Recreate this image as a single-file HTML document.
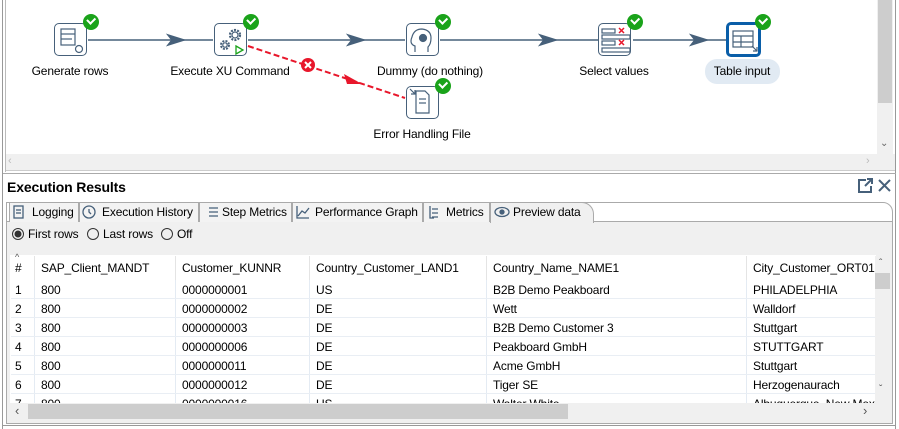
<!DOCTYPE html>
<html><head><meta charset="utf-8">
<style>
*{box-sizing:border-box}
body{margin:0;width:899px;height:429px;overflow:hidden;background:#fff;font-family:"Liberation Sans",sans-serif;font-size:12px;color:#000;position:relative;letter-spacing:-0.15px}
.abs{position:absolute}
.lbl{position:absolute;font-size:12px;white-space:nowrap;transform:translateX(-50%)}
.node{position:absolute;width:33px;height:33px;border:1.5px solid #46607a;border-radius:5px;background:#fff}
.ok{position:absolute;width:16px;height:16px;border-radius:50%;background:#1aa31a}
.ok:after{content:"";position:absolute;left:4px;top:3px;width:6px;height:3.5px;border-left:2px solid #fff;border-bottom:2px solid #fff;transform:rotate(-45deg)}
.tab{position:absolute;top:202px;height:20px;border:1px solid #aaa;border-bottom:none;background:#f3f3f3;font-size:12px;padding:2px 0 0 22px;white-space:nowrap}
.th{position:absolute;top:256px;height:24px;font-size:12px;padding-top:5px;white-space:nowrap}
.row{position:absolute;left:11px;width:864px;height:19px;border-bottom:1px solid #e9eef4}
.c{position:absolute;top:3px;white-space:nowrap;font-size:12px}
.vl{position:absolute;top:280px;height:123px;width:1px;background:#e4ebf3}
</style></head><body>
<!-- canvas -->
<div class="abs" style="left:2px;top:0;width:1px;height:429px;background:#999"></div>
<div class="abs" style="left:5px;top:0;width:1px;height:172px;background:#bbb"></div>
<div class="abs" style="left:877px;top:0;width:16px;height:155px;background:#f0f0f0"></div>
<div class="abs" style="left:878px;top:0;width:14px;height:103px;background:#cdcdcd"></div>
<div class="abs" style="left:880px;top:138px;font-size:10px;color:#666">&#8964;</div>
<div class="abs" style="left:895px;top:0;width:1px;height:429px;background:#999"></div>
<div class="abs" style="left:6px;top:154px;width:889px;height:17px;background:#f0f0f0;border-bottom:1px solid #ccc"></div>
<div class="abs" style="left:8px;top:155px;font-size:11px;color:#bbb">&lsaquo;</div>
<div class="abs" style="left:866px;top:155px;font-size:11px;color:#bbb">&rsaquo;</div>

<svg class="abs" style="left:0;top:0" width="877" height="154">
<g stroke="#46607a" stroke-width="1.5" fill="#46607a">
<line x1="88" y1="40" x2="213" y2="40"/><path d="M168 35 L184 40 L168 45 L172 40Z"/>
<line x1="248" y1="40" x2="405" y2="40"/><path d="M348 35 L364 40 L348 45 L352 40Z"/>
<line x1="440" y1="40" x2="598" y2="40"/><path d="M540 35 L556 40 L540 45 L544 40Z"/>
<line x1="633" y1="40" x2="727" y2="40"/><path d="M691 35 L707 40 L691 45 L695 40Z"/>
</g>
<line x1="248" y1="46" x2="405" y2="98" stroke="#e8172b" stroke-width="2" stroke-dasharray="6,3"/>
<path d="M344 74 L362 84 L347 84Z" fill="#e8172b"/>
<circle cx="308" cy="65" r="7" fill="#e8172b"/>
<path d="M305 62 L311 68 M311 62 L305 68" stroke="#fff" stroke-width="2"/>
<g stroke="#46607a" fill="none" stroke-width="1.2">
<rect x="61" y="29" width="14" height="16"/><line x1="61" y1="34" x2="75" y2="34"/><line x1="61" y1="39" x2="72" y2="39"/>
<circle cx="79" cy="49" r="3.5"/>
<circle cx="235" cy="35" r="5" stroke-dasharray="2,1.2" stroke-width="2.2"/><circle cx="235" cy="35" r="3"/>
<circle cx="225" cy="45" r="4" stroke-dasharray="2,1.2" stroke-width="2"/><circle cx="225" cy="45" r="2.2"/>
<path d="M415 52 L415 46 Q409 44 412 37 Q414 29 422 29 Q431 30 431 38 Q431 44 428 47 L428 52"/>
<circle cx="423" cy="38" r="3.5" fill="#46607a"/>
<path d="M416 91 L425 91 L429 95 L429 113 L416 113Z"/><line x1="419" y1="99" x2="426" y2="99"/><line x1="419" y1="103" x2="426" y2="103"/><path d="M410 89 L415 94 M415 90 L415 94 L411 94"/>
<rect x="602" y="29" width="13" height="4"/><rect x="602" y="35" width="28" height="4"/><rect x="602" y="41" width="13" height="4"/><rect x="602" y="48" width="28" height="4"/>
<rect x="733" y="31" width="20" height="16"/><line x1="733" y1="36" x2="753" y2="36"/><line x1="741" y1="36" x2="741" y2="47"/><line x1="733" y1="42" x2="753" y2="42"/>
<path d="M752 46 L757 51 M757 47 L757 51 L753 51"/>
</g>
<path d="M236 46 L243 50 L236 54Z" stroke="#1aa31a" fill="none" stroke-width="1.3"/>
<path d="M619 28 L624 33 M624 28 L619 33 M619 40 L624 45 M624 40 L619 45" stroke="#e8172b" stroke-width="1.5"/>
</svg>
<div class="node" style="left:54px;top:23px;background:transparent"></div>
<div class="node" style="left:214px;top:23px;background:transparent"></div>
<div class="node" style="left:406px;top:23px;background:transparent"></div>
<div class="node" style="left:406px;top:86px;background:transparent"></div>
<div class="node" style="left:598px;top:23px;background:transparent"></div>
<div class="node" style="left:726px;top:22px;width:35px;height:35px;border:3px solid #0a5ea8;background:transparent"></div>
<div class="ok" style="left:83px;top:14px"></div>
<div class="ok" style="left:243px;top:14px"></div>
<div class="ok" style="left:435px;top:14px"></div>
<div class="ok" style="left:435px;top:78px"></div>
<div class="ok" style="left:627px;top:14px"></div>
<div class="ok" style="left:755px;top:14px"></div>
<div class="lbl" style="left:70px;top:64px">Generate rows</div>
<div class="lbl" style="left:230px;top:64px">Execute XU Command</div>
<div class="lbl" style="left:430px;top:64px">Dummy (do nothing)</div>
<div class="lbl" style="left:422px;top:127px">Error Handling File</div>
<div class="lbl" style="left:614px;top:64px">Select values</div>
<div class="abs" style="left:705px;top:59px;width:75px;height:25px;border-radius:12px;background:#e1eaf3"></div>
<div class="lbl" style="left:742px;top:64px">Table input</div>

<!-- bottom panel -->
<div class="abs" style="left:3px;top:173px;width:893px;height:1px;background:#aaa"></div>
<div class="abs" style="left:7px;top:179px;font-weight:bold;font-size:14px">Execution Results</div>
<svg class="abs" style="left:857px;top:177px" width="38" height="18"><path d="M9 3 L2 3 L2 15 L14 15 L14 9 M8 9 L15 2 M10 2 L15 2 L15 7" stroke="#46607a" stroke-width="2" fill="none"/><path d="M22 3 L33 14 M33 3 L22 14" stroke="#46607a" stroke-width="2"/></svg>
<div class="abs" style="left:6px;top:202px;width:887px;height:222px;border:1px solid #aaa;border-radius:0 10px 0 0;background:#fff"></div>
<div class="abs" style="left:7px;top:221px;width:885px;height:202px;background:#f0f0f0;border-top:1px solid #aaa"></div>
<div class="tab" style="left:9px;width:70px">Logging</div>
<div class="tab" style="left:79px;width:120px">Execution History</div>
<div class="tab" style="left:199px;width:93px">Step Metrics</div>
<div class="tab" style="left:292px;width:131px">Performance Graph</div>
<div class="tab" style="left:423px;width:67px">Metrics</div>
<div class="tab" style="left:490px;width:104px;background:#f0f0f0;border-radius:0 12px 0 0;height:21px">Preview data</div>
<svg class="abs" style="left:12px;top:205px" width="580" height="16" fill="none" stroke="#46607a" stroke-width="1.3">
<rect x="2" y="1" width="9" height="12"/><line x1="4" y1="5" x2="9" y2="5"/><line x1="4" y1="8" x2="9" y2="8"/>
<circle cx="77" cy="7" r="6"/><path d="M77 4 L77 7 L79 9"/>
<path d="M197 3 L206 3 M197 7 L206 7 M197 11 L206 11"/>
<path d="M285 1 L285 13 L297 13 M286 11 L290 6 L293 8 L297 3"/>
<path d="M418 1 L418 13 L422 13 M420 4 L426 4 M420 8 L426 8 M420 12 L426 12"/>
<ellipse cx="490" cy="7" rx="7" ry="4.5"/><circle cx="490" cy="7" r="2" fill="#46607a"/>
</svg>
<svg class="abs" style="left:11px;top:227px" width="190" height="14" fill="none" stroke="#333">
<circle cx="7" cy="7" r="5.5"/><circle cx="7" cy="7" r="3" fill="#333"/>
<circle cx="82" cy="7" r="5.5"/><circle cx="156" cy="7" r="5.5"/>
</svg>
<div class="abs" style="left:28px;top:227px">First rows</div>
<div class="abs" style="left:103px;top:227px">Last rows</div>
<div class="abs" style="left:177px;top:227px">Off</div>
<!-- table -->
<div class="abs" style="left:10px;top:255px;width:866px;height:148px;background:#fff"></div>
<div class="abs" style="left:15px;top:252px;font-size:9px;color:#555">^</div>
<div class="th" style="left:15px">#</div>
<div class="th" style="left:41px">SAP_Client_MANDT</div>
<div class="th" style="left:182px">Customer_KUNNR</div>
<div class="th" style="left:316px">Country_Customer_LAND1</div>
<div class="th" style="left:493px">Country_Name_NAME1</div>
<div class="th" style="left:753px">City_Customer_ORT01</div>
<div class="abs" style="left:34px;top:256px;width:1px;height:24px;background:#e4e4e4"></div>
<div class="abs" style="left:175px;top:256px;width:1px;height:24px;background:#e4e4e4"></div>
<div class="abs" style="left:309px;top:256px;width:1px;height:24px;background:#e4e4e4"></div>
<div class="abs" style="left:486px;top:256px;width:1px;height:24px;background:#e4e4e4"></div>
<div class="abs" style="left:746px;top:256px;width:1px;height:24px;background:#e4e4e4"></div>
<div class="vl" style="left:34px"></div><div class="vl" style="left:175px"></div><div class="vl" style="left:309px"></div><div class="vl" style="left:486px"></div><div class="vl" style="left:746px"></div>
<div style="position:absolute;left:0;top:280px;height:123px;width:875px;overflow:hidden">
<div class="row" style="top:0"><span class="c" style="left:4px">1</span><span class="c" style="left:30px">800</span><span class="c" style="left:171px">0000000001</span><span class="c" style="left:305px">US</span><span class="c" style="left:482px">B2B Demo Peakboard</span><span class="c" style="left:742px">PHILADELPHIA</span></div>
<div class="row" style="top:19px"><span class="c" style="left:4px">2</span><span class="c" style="left:30px">800</span><span class="c" style="left:171px">0000000002</span><span class="c" style="left:305px">DE</span><span class="c" style="left:482px">Wett</span><span class="c" style="left:742px">Walldorf</span></div>
<div class="row" style="top:38px"><span class="c" style="left:4px">3</span><span class="c" style="left:30px">800</span><span class="c" style="left:171px">0000000003</span><span class="c" style="left:305px">DE</span><span class="c" style="left:482px">B2B Demo Customer 3</span><span class="c" style="left:742px">Stuttgart</span></div>
<div class="row" style="top:57px"><span class="c" style="left:4px">4</span><span class="c" style="left:30px">800</span><span class="c" style="left:171px">0000000006</span><span class="c" style="left:305px">DE</span><span class="c" style="left:482px">Peakboard GmbH</span><span class="c" style="left:742px">STUTTGART</span></div>
<div class="row" style="top:76px"><span class="c" style="left:4px">5</span><span class="c" style="left:30px">800</span><span class="c" style="left:171px">0000000011</span><span class="c" style="left:305px">DE</span><span class="c" style="left:482px">Acme GmbH</span><span class="c" style="left:742px">Stuttgart</span></div>
<div class="row" style="top:95px"><span class="c" style="left:4px">6</span><span class="c" style="left:30px">800</span><span class="c" style="left:171px">0000000012</span><span class="c" style="left:305px">DE</span><span class="c" style="left:482px">Tiger SE</span><span class="c" style="left:742px">Herzogenaurach</span></div>
<div class="row" style="top:114px"><span class="c" style="left:4px">7</span><span class="c" style="left:30px">800</span><span class="c" style="left:171px">0000000016</span><span class="c" style="left:305px">US</span><span class="c" style="left:482px">Walter White</span><span class="c" style="left:742px">Albuquerque, New Mexico</span></div>
</div>
<div class="abs" style="left:875px;top:256px;width:16px;height:147px;background:#f0f0f0"></div>
<div class="abs" style="left:875px;top:273px;width:15px;height:16px;background:#cdcdcd"></div>
<div class="abs" style="left:879px;top:258px;font-size:10px;color:#555">&#710;</div>
<div class="abs" style="left:879px;top:384px;font-size:10px;color:#555">&#711;</div>
<div class="abs" style="left:10px;top:403px;width:866px;height:17px;background:#f0f0f0"></div>
<div class="abs" style="left:28px;top:404px;width:540px;height:15px;background:#cdcdcd"></div>
<div class="abs" style="left:15px;top:403px;font-size:13px;color:#555">&lsaquo;</div>
<div class="abs" style="left:863px;top:403px;font-size:13px;color:#555">&rsaquo;</div>
<div class="abs" style="left:3px;top:425px;width:893px;height:1px;background:#999"></div>
</body></html>
